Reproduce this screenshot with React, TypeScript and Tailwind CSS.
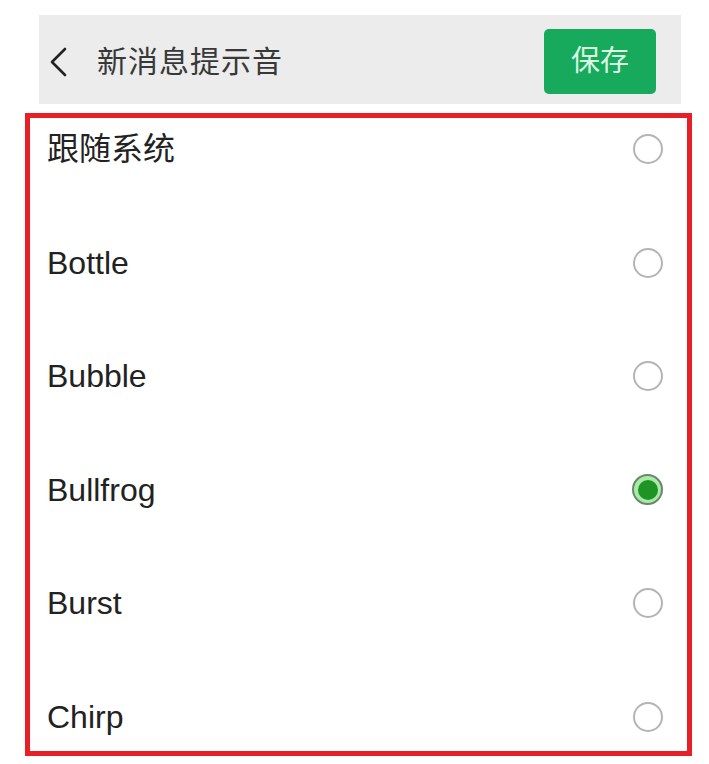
import React from 'react';

const sounds = ['跟随系统', 'Bottle', 'Bubble', 'Bullfrog', 'Burst', 'Chirp'];

function Radio({ checked }: { checked: boolean }) {
  if (checked) {
    return (
      <div className="flex h-[31px] w-[31px] items-center justify-center rounded-full border-2 border-[#6a876b] bg-[#a8eaa8]">
        <div className="h-[20px] w-[20px] rounded-full bg-[#1d9424]" />
      </div>
    );
  }
  return <div className="h-[30px] w-[30px] rounded-full border-[2.5px] border-[#b4b4b4]" />;
}

export default function App() {
  const selected = 'Bullfrog';

  return (
    <div className="min-h-[764px] w-[709px] bg-white font-['Liberation_Sans','Noto_Sans_CJK_SC',sans-serif]">
      {/* Header */}
      <div className="pt-[15px] pl-[39px]">
        <div className="flex h-[89px] w-[642px] items-center bg-[#ececec] pl-[9px] pr-[25px]">
          <svg width="20" height="30" viewBox="0 0 20 30" className="mt-[5px]">
            <path d="M17 2 L4 15 L17 28" fill="none" stroke="#222" strokeWidth="2.6" strokeLinecap="round" strokeLinejoin="round" />
          </svg>
          <h1 className="ml-[29px] mt-[4px] text-[30px] leading-none text-[#383838] tracking-[1px]">新消息提示音</h1>
          <button className="ml-auto mt-[4px] flex h-[65px] w-[112px] items-center justify-center rounded-[5px] bg-[#17a95c] text-[29px] text-[#d9f7e2]">
            保存
          </button>
        </div>
      </div>

      {/* Sound list */}
      <div className="ml-[25px] mt-[9px] h-[643px] w-[667px] border-[5px] border-[#e81f27] bg-white">
        <ul className="flex flex-col gap-[51.6px] pl-[17px] pr-[24px]">
          {sounds.map((name) => (
            <li key={name} className="flex h-[62px] items-center justify-between">
              <span className="text-[32px] leading-none text-[#222]">{name}</span>
              <Radio checked={name === selected} />
            </li>
          ))}
        </ul>
      </div>
    </div>
  );
}
